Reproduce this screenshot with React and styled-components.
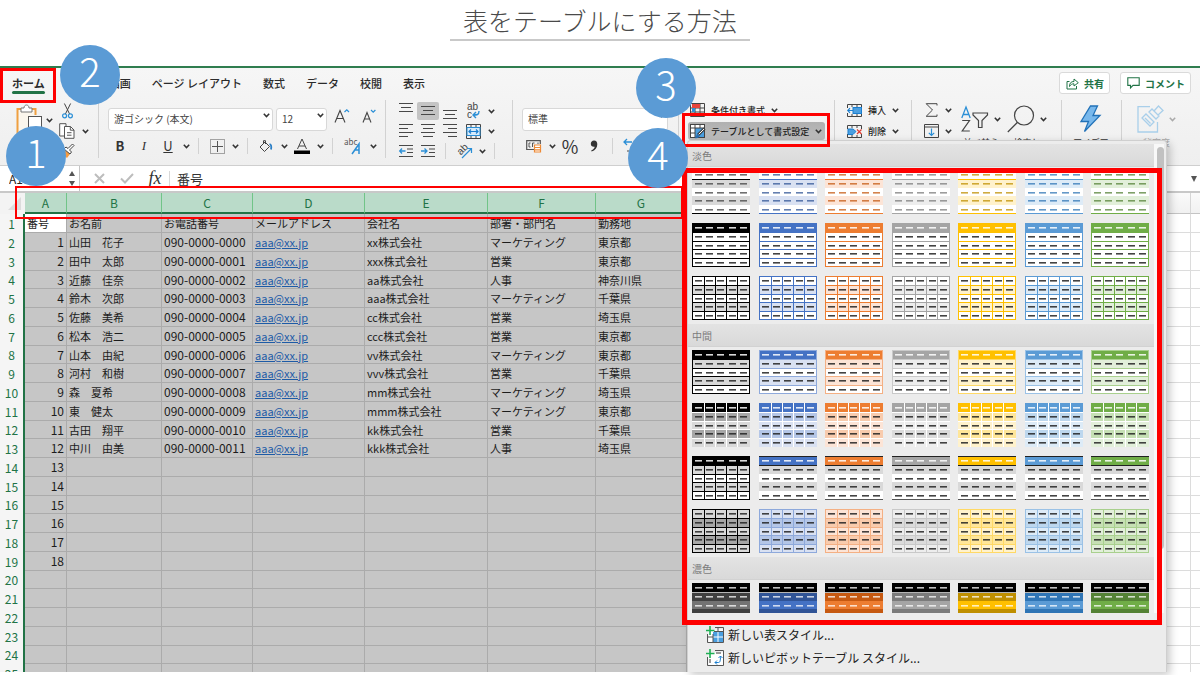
import { useState } from 'react'
import styled, { createGlobalStyle, css } from 'styled-components'

const GlobalStyle = createGlobalStyle`
  * {
    box-sizing: border-box;
  }

  body {
    margin: 0;
    background: #fff;
    color: #222;
    font-family: 'Noto Sans CJK JP', 'Noto Sans', sans-serif;
  }

  button, input, select {
    margin: 0;
    padding: 0;
    border: none;
    background: none;
    color: inherit;
    font-family: inherit;
  }

  svg {
    display: block;
    flex: none;
    overflow: visible;
  }
`

const Page = styled.div`
  position: relative;
  height: 100vh;
  display: flex;
  flex-direction: column;
  padding-bottom: 3px;
  overflow: hidden;
`
const Title = styled.h1`
  align-self: center;
  width: 300px;
  height: 41px;
  margin: 0 0 25px;
  padding-top: 2px;
  border-bottom: 2px solid #c9c9c9;
  color: #4a4a4a;
  font-size: 25px;
  font-weight: 300;
  line-height: 36px;
  text-align: center;
  flex: none;
`
const Window = styled.main`
  flex: 1;
  min-height: 0;
  display: flex;
  flex-direction: column;
  border-top: 2px solid #2f7d4f;
`
const Chrome = styled.header`
  flex: none;
  background: linear-gradient(#f6f6f6, #efefef);
  border-bottom: 1px solid #cfcfcf;
`
const Tabs = styled.nav`
  display: flex;
  align-items: center;
  gap: 21px;
  height: 30px;
  padding: 0 9px 0 12px;
`
const Tab = styled.a`
  position: relative;
  color: #2b2b2b;
  font-size: 11px;
  font-weight: ${({ $active }) => ($active ? 700 : 500)};
  line-height: 16px;
  text-decoration: none;
  white-space: nowrap;

  ${({ $active }) =>
    $active &&
    css`
      &::after {
        content: '';
        position: absolute;
        left: 0;
        right: 0;
        top: 16px;
        height: 3px;
        border-radius: 2px;
        background: #217346;
      }
    `}
`
const TabActions = styled.div`
  display: flex;
  gap: 10px;
  margin-left: auto;
`
const ActionButton = styled.button`
  display: flex;
  align-items: center;
  gap: 5px;
  height: 22px;
  padding: 0 5px 0 6px;
  border: 1px solid #dadada;
  border-radius: 3px;
  background: #fff;
  color: #217346;
  font-size: 10px;
  font-weight: 700;
`

const Ribbon = styled.div`
  display: flex;
  height: 67px;
`
const Group = styled.section`
  position: relative;
  flex: ${({ $width }) => ($width ? `0 0 ${$width}px` : 1)};
  display: flex;
  gap: ${({ $gap }) => $gap || 0}px;
  padding: 3px 0 0 ${({ $inset }) => $inset || 0}px;

  &::after {
    content: '';
    position: absolute;
    right: 0;
    top: 2px;
    width: ${({ $width }) => ($width ? 1 : 0)}px;
    height: 58px;
    background: #d2d2d2;
  }
`
const Stack = styled.div`
  display: flex;
  flex-direction: column;
  gap: ${({ $gap }) => $gap || 0}px;
`
const Line = styled.div`
  display: flex;
  align-items: center;
  height: ${({ $height }) => $height || 20}px;
`
const FieldLine = styled.div`
  display: flex;
  align-items: center;
  gap: 3px;
  height: 29px;
`
const Tool = styled.button`
  display: flex;
  align-items: center;
  justify-content: center;
  width: ${({ $width }) => $width || 24}px;
  height: 18px;
  border-radius: 2px;
  background: ${({ $on }) => ($on ? '#c4c4c4' : 'none')};
  color: #333;
  font-size: ${({ $size }) => $size || 13}px;
  line-height: 18px;

  i {
    font-family: 'Liberation Serif', serif;
  }
`
const Separator = styled.span`
  width: 1px;
  height: 16px;
  margin: 0 6px;
  background: #d2d2d2;
`
const LabelTool = styled.button`
  display: flex;
  align-items: center;
  gap: 6px;
  height: 18px;
  padding: 0 3px 0 2px;
  border-radius: 3px;
  background: ${({ $on }) => ($on ? 'linear-gradient(#b0b0b0, #bdbdbd)' : 'none')};
  color: #222;
  font-size: 9px;
  font-weight: 500;
  white-space: nowrap;
`
const BigTool = styled.button`
  display: flex;
  flex-direction: column;
  align-items: center;
  height: 50px;
  color: ${({ $dim }) => ($dim ? '#a9a9a9' : '#333')};
  font-size: 9px;
  line-height: 12px;
  white-space: nowrap;

  span {
    display: flex;
    align-items: center;
    gap: 5px;
    height: 36px;
  }
`
const SelectBox = styled.label`
  position: relative;
  display: block;
  width: ${({ $width }) => $width}px;
  height: 23px;

  select {
    width: 100%;
    height: 100%;
    padding: 0 5px 2px;
    border: 1px solid #d8d8d8;
    border-radius: 3px;
    background: #fff;
    color: #444;
    font-size: 10px;
    appearance: none;
  }

  svg {
    position: absolute;
    right: 3px;
    top: 9px;
  }
`

const FormulaBar = styled.div`
  flex: none;
  display: flex;
  align-items: center;
  height: 25px;
  background: #fff;
`
const NameBox = styled.div`
  display: flex;
  align-items: center;
  width: 80px;
  height: 25px;
  margin-right: 5px;
  padding: 0 3px 0 9px;
  border-right: 1px solid #c4c4c4;

  input {
    flex: 1;
    min-width: 0;
    font-size: 12px;
  }
`
const FormulaTool = styled.button`
  display: flex;
  justify-content: center;
  width: 28px;
  color: #333;
  font-family: 'Liberation Serif', serif;
  font-size: 18px;
  font-style: italic;
`
const FormulaInput = styled.input`
  flex: 1;
  height: 16px;
  padding-left: 7px;
  border-left: 1px solid #d8d8d8;
  color: #333;
  font-size: 13px;
  outline: none;
`

const Sheet = styled.div`
  flex: 1;
  min-height: 0;
  overflow: hidden;
  border-top: 2px solid #c8c8c8;
`
const Table = styled.table`
  width: max-content;
  table-layout: fixed;
  border-collapse: separate;
  border-spacing: 0;
  font-size: 11px;
  line-height: 16px;

  tbody tr {
    height: 19px;
  }

  tbody tr:nth-child(4n) {
    height: 18px;
  }
`
const ColumnHead = styled.th`
  height: 21px;
  padding: 0;
  border-right: 1px solid ${({ $on }) => ($on ? '#71c488' : '#d6d6d6')};
  border-bottom: ${({ $on }) => ($on ? '2px solid #217346' : '1px solid #c4c4c4')};
  background: ${({ $on }) => ($on ? '#badbc9' : 'linear-gradient(#fafafa, #f1f1f1)')};
  color: #217346;
  font-size: 12px;
  font-weight: 400;
`
const Corner = styled.th`
  padding: 0 0 0 7px;
  background: #f3f3f3;
`
const RowHead = styled.th`
  padding: 0;
  border-right: 2px solid #217346;
  background: #f5f5f5;
  color: #217346;
  font-size: 12px;
  font-weight: 400;
`
const Cell = styled.td`
  padding: 0 2px;
  border-right: 1px solid ${({ $on }) => ($on ? '#ababab' : '#dcdcdc')};
  border-bottom: 1px solid ${({ $on }) => ($on ? '#ababab' : '#dcdcdc')};
  background: ${({ $on, $cursor }) => ($on && !$cursor ? '#c6c6c6' : '#fff')};
  color: #1c1c1c;
  font-size: ${({ $digits }) => ($digits ? 12 : 11)}px;
  text-align: ${({ $right }) => ($right ? 'right' : 'left')};
  white-space: nowrap;
  overflow: hidden;

  a {
    color: #1d5ba6;
  }
`

const Panel = styled.div`
  position: absolute;
  z-index: 2;
  top: 42px;
  left: 8px;
  width: 480px;
  height: 532px;
  display: flex;
  flex-direction: column;
  padding-top: 3px;
  border: 1px solid #cfcfcf;
  border-bottom: none;
  border-radius: 4px 4px 0 0;
  background: #ececec;
  box-shadow: 3px 3px 8px rgba(0, 0, 0, 0.22);
`
const List = styled.div`
  flex: 1;
  min-height: 0;
  display: flex;
  padding-right: 2px;
`
const Gallery = styled.div`
  flex: 1;
  overflow: hidden;
`
const Track = styled.div`
  width: 10px;
  padding: 3px 0 0 3px;
  background: #f8f8f8;
`
const Thumb = styled.div`
  width: 7px;
  height: 402px;
  border-radius: 4px;
  background: #c1c1c1;
`
const SectionTitle = styled.h2`
  height: 23px;
  margin: 0;
  padding-left: 4px;
  border-bottom: 1px solid #d2d2d2;
  background: linear-gradient(#e3e3e3, #d9d9d9);
  color: #7c7c7c;
  font-size: 10px;
  font-weight: 400;
  line-height: 23px;
`
const Swatches = styled.div`
  display: grid;
  grid-template-columns: repeat(7, max-content);
  justify-content: space-between;
  row-gap: 9px;
  padding: 3px 5px 4px 4px;
`
const Footer = styled.div`
  flex: none;
  padding: 10px 0 3px 18px;
`
const MenuItem = styled.button`
  display: flex;
  align-items: center;
  gap: 4px;
  height: 23px;
  color: #222;
  font-size: 12px;
`

const Mark = styled.div`
  position: absolute;
  z-index: 3;
  left: ${({ $x }) => $x}px;
  top: ${({ $y }) => $y}px;
  width: ${({ $w }) => $w}px;
  height: ${({ $h }) => $h}px;
  border: ${({ $line }) => $line || 2}px solid #fe0000;
  pointer-events: none;
`
const Step = styled.div`
  position: absolute;
  z-index: 4;
  left: ${({ $x }) => $x}px;
  top: ${({ $y }) => $y}px;
  width: 60px;
  height: 60px;
  border-radius: 50%;
  background: #5b9bd5;
  color: #fff;
  font-size: 40px;
  font-weight: 300;
  line-height: 50px;
  text-align: center;
`

const tabs = ['ホーム', '挿入', '描画', 'ページ レイアウト', '数式', 'データ', '校閲', '表示']

const columns = [
  { name: 'A', width: 42, on: true },
  { name: 'B', width: 95, on: true },
  { name: 'C', width: 91, on: true },
  { name: 'D', width: 112, on: true },
  { name: 'E', width: 123, on: true },
  { name: 'F', width: 108, on: true },
  { name: 'G', width: 91, on: true },
  { name: 'H', width: 126 },
  { name: 'I', width: 126 },
  { name: 'J', width: 126 },
  { name: 'K', width: 126 },
  { name: 'L', width: 126 },
]

const people = [
  ['番号', 'お名前', 'お電話番号', 'メールアドレス', '会社名', '部署・部門名', '勤務地'],
  [1, '山田　花子', '090-0000-0000', 'aaa@xx.jp', 'xx株式会社', 'マーケティング', '東京都'],
  [2, '田中　太郎', '090-0000-0001', 'aaa@xx.jp', 'xxx株式会社', '営業', '東京都'],
  [3, '近藤　佳奈', '090-0000-0002', 'aaa@xx.jp', 'aa株式会社', '人事', '神奈川県'],
  [4, '鈴木　次郎', '090-0000-0003', 'aaa@xx.jp', 'aaa株式会社', 'マーケティング', '千葉県'],
  [5, '佐藤　美希', '090-0000-0004', 'aaa@xx.jp', 'cc株式会社', '営業', '埼玉県'],
  [6, '松本　浩二', '090-0000-0005', 'aaa@xx.jp', 'ccc株式会社', '営業', '東京都'],
  [7, '山本　由紀', '090-0000-0006', 'aaa@xx.jp', 'vv株式会社', 'マーケティング', '東京都'],
  [8, '河村　和樹', '090-0000-0007', 'aaa@xx.jp', 'vvv株式会社', '営業', '千葉県'],
  [9, '森　夏希', '090-0000-0008', 'aaa@xx.jp', 'mm株式会社', 'マーケティング', '埼玉県'],
  [10, '東　健太', '090-0000-0009', 'aaa@xx.jp', 'mmm株式会社', 'マーケティング', '東京都'],
  [11, '古田　翔平', '090-0000-0010', 'aaa@xx.jp', 'kk株式会社', '営業', '千葉県'],
  [12, '中川　由美', '090-0000-0011', 'aaa@xx.jp', 'kkk株式会社', '人事', '埼玉県'],
  [13],
  [14],
  [15],
  [16],
  [17],
  [18],
]

const rows = Array.from({ length: 25 }, (_, i) => people[i] || [])

const themes = [
  { name: '黒', base: '#000000', line: '#000000', tint: '#d9d9d9', mid: '#a6a6a6', dark: '#404040', body: '#737373' },
  { name: '青', base: '#4472c4', line: '#8ea9db', tint: '#d9e1f2', mid: '#b4c6e7', dark: '#305496', body: '#4472c4' },
  { name: 'オレンジ', base: '#ed7d31', line: '#f4b084', tint: '#fce4d6', mid: '#f8cbad', dark: '#c65911', body: '#ed7d31' },
  { name: '灰色', base: '#a5a5a5', line: '#c9c9c9', tint: '#ededed', mid: '#dbdbdb', dark: '#7b7b7b', body: '#a5a5a5' },
  { name: '金', base: '#ffc000', line: '#ffd966', tint: '#fff2cc', mid: '#ffe699', dark: '#bf8f00', body: '#ffc000' },
  { name: '水色', base: '#5b9bd5', line: '#9bc2e6', tint: '#ddebf7', mid: '#bdd7ee', dark: '#2f75b5', body: '#5b9bd5' },
  { name: '緑', base: '#70ad47', line: '#a9d08e', tint: '#e2efda', mid: '#c6e0b4', dark: '#548235', body: '#70ad47' },
]

// every preset says how its five bands, its rules and its dashes are coloured
const presets = {
  light1: (t) => ({
    bands: ['#fff', t.tint, '#fff', t.tint, '#fff'],
    rules: { 0: t.base, 1: t.base, 5: t.base },
    head: t.dark,
    dash: t.dark,
    soft: 0.75,
  }),
  light2: (t) => ({
    bands: [t.base, '#fff', '#fff', '#fff', '#fff'],
    rules: { 1: t.base, 2: t.base, 3: t.base, 4: t.base },
    frame: t.base,
    head: '#fff',
  }),
  light3: (t) => ({
    bands: ['#fff', t.tint, '#fff', t.tint, '#fff'],
    rules: { 1: t.base, 2: t.base, 3: t.base, 4: t.base },
    columns: t.base,
    frame: t.base,
  }),
  medium1: (t) => ({
    bands: [t.base, t.tint, '#fff', t.tint, '#fff'],
    rules: { 1: t.line, 2: t.line, 3: t.line, 4: t.line },
    frame: t.line,
    head: '#fff',
  }),
  medium2: (t) => ({
    bands: [t.base, t.mid, t.tint, t.mid, t.tint],
    rules: { 1: '#fff', 2: '#fff', 3: '#fff', 4: '#fff' },
    columns: '#fff',
    head: '#fff',
  }),
  medium3: (t) =>
    t.base === '#000000'
      ? {
          bands: ['#000', t.tint, '#fff', t.tint, '#fff'],
          rules: { 1: '#000', 2: '#000', 3: '#000', 4: '#000' },
          columns: '#000',
          frame: '#000',
          head: '#fff',
        }
      : {
          bands: [t.base, '#d9d9d9', '#fff', '#d9d9d9', '#fff'],
          rules: { 0: '#222', 1: '#222', 5: '#555' },
          head: '#fff',
        },
  medium4: (t) => ({
    bands: [t.tint, t.mid, t.tint, t.mid, t.tint],
    rules: { 1: t.line, 2: t.line, 3: t.line, 4: t.line },
    columns: t.line,
    frame: t.line,
  }),
  dark1: (t) => ({
    bands: ['#000', t.dark, t.body, t.dark, t.body],
    rules: { 1: '#b5b5b5' },
    head: '#fff',
    dash: '#fff',
    soft: 0.75,
  }),
}

const sections = [
  { title: '淡色', presets: ['light1', 'light2', 'light3'] },
  { title: '中間', presets: ['medium1', 'medium2', 'medium3', 'medium4'] },
  { title: '濃色', presets: ['dark1'] },
]

const bandTops = [0, 9, 18, 26, 35, 43]

function Swatch({ theme, preset }) {
  const look = presets[preset](theme)
  return (
    <button aria-label={`${theme.name} ${preset}`}>
      <svg width="58" height="44" viewBox="0 0 58 44">
        <g shapeRendering="crispEdges">
          {look.bands.map((fill, i) => (
            <rect
              key={i}
              y={bandTops[i]}
              width="58"
              height={(i === 4 ? 44 : bandTops[i + 1]) - bandTops[i]}
              fill={fill}
            />
          ))}
          {Object.entries(look.rules).map(([i, fill]) => (
            <rect key={i} y={bandTops[i]} width="58" height="1" fill={fill} />
          ))}
          {look.columns &&
            [12, 23, 34, 45].map((x) => (
              <rect key={x} x={x} width="1" height="44" fill={look.columns} />
            ))}
          {look.frame && (
            <rect x="0.5" y="0.5" width="57" height="43" fill="none" stroke={look.frame} />
          )}
        </g>
        {look.bands.map((_, row) =>
          [3, 14, 25, 37, 48].map((x) => (
            <rect
              key={`${row}-${x}`}
              x={x}
              y={bandTops[row] + 4}
              width="7"
              height="1.6"
              fill={(row === 0 && look.head) || look.dash || '#222'}
              opacity={look.soft || 0.85}
            />
          ))
        )}
      </svg>
    </button>
  )
}

const Chevron = ({ color = '#333' }) => (
  <svg width="7" height="5" viewBox="0 0 7 5" fill="none" stroke={color} strokeWidth="1.5">
    <path d="M0.8 0.8 L3.5 3.6 L6.2 0.8" />
  </svg>
)

const More = ({ label }) => (
  <Tool $width={12} aria-label={label}>
    <Chevron />
  </Tool>
)

const PasteIcon = () => (
  <svg width="27" height="38" viewBox="0 0 27 38" fill="none">
    <path d="M5 8 H1.5 V32 H12 M16 8 H19.5 V14" stroke="#f0a040" strokeWidth="2" />
    <rect x="3" y="9" width="15" height="22" fill="#fbf6ec" />
    <path d="M5 11 V7 H8 C8 3 13 3 13 7 H16 V11 Z" fill="#fff" stroke="#777" />
    <rect x="12.5" y="15.5" width="13" height="15" fill="#fff" stroke="#555" />
  </svg>
)

const CutIcon = () => (
  <svg width="11" height="16" viewBox="0 0 11 16" fill="none">
    <path d="M2.4 0.5 L7.6 11 M8.6 0.5 L3.4 11" stroke="#444" />
    <circle cx="2.6" cy="12.8" r="2" stroke="#2b8fd6" strokeWidth="1.2" />
    <circle cx="8.4" cy="12.8" r="2" stroke="#2b8fd6" strokeWidth="1.2" />
  </svg>
)

const CopyIcon = () => (
  <svg width="16" height="16" viewBox="0 0 16 16" stroke="#555" fill="#fff">
    <path d="M5 13 H0.7 V0.7 H7 V4" />
    <path d="M5.5 3.5 H11.5 L15 7 V15.3 H5.5 Z" />
    <path d="M11.3 3.5 V7.2 H15 M8 9.7 H12.5 M8 12.2 H12.5" fill="none" />
  </svg>
)

const BrushIcon = () => (
  <svg width="16" height="16" viewBox="0 0 16 16">
    <path d="M1 9 L8 15 L11 11 L5 6 Z" fill="#f59b42" />
    <path d="M5 6 L11 11 L12.5 9 L10.5 7 L15 2.5 L13.5 1 L9 5.5 L7 4 Z" fill="#fff" stroke="#444" />
  </svg>
)

const BorderIcon = () => (
  <svg width="15" height="15" viewBox="0 0 15 15" fill="none" stroke="#555">
    <rect x="0.5" y="0.5" width="14" height="14" strokeDasharray="1 1" />
    <path d="M7.5 2 V13 M2 7.5 H13" />
  </svg>
)

const BucketIcon = () => (
  <svg width="14" height="13" viewBox="0 0 14 13" fill="none" stroke="#444">
    <path d="M1 7 L6 2 L10.5 6.5 L5.5 11.5 Z M4.5 3.5 V0.7 H6.5 V4" />
    <path d="M10.5 4 C12.5 4.5 12.5 7 12 9.5" stroke="#2b7fc6" strokeWidth="1.8" />
  </svg>
)

const FontColorIcon = () => (
  <svg width="17" height="16" viewBox="0 0 17 16">
    <path d="M3.5 11 L8 1 L12.5 11 M5 8 H11" fill="none" stroke="#444" />
    <rect y="12.5" width="16" height="3.5" fill="#000" />
  </svg>
)

const PhoneticIcon = () => (
  <svg width="18" height="17" viewBox="0 0 18 17">
    <text x="0" y="7" fontSize="8" fill="#555">
      abc
    </text>
    <path d="M8 16 L15 6 V16 M11 12 H15.5" fill="none" stroke="#2b8fd6" strokeWidth="1.5" />
  </svg>
)

const GrowIcon = () => (
  <svg width="16" height="16" viewBox="0 0 16 16" fill="none">
    <path d="M1 14.5 L6 2.5 L11 14.5 M2.6 10.5 H9.4" stroke="#444" strokeWidth="1.1" />
    <path d="M10.5 4 L12.8 1.8 L15 4" stroke="#2b8fd6" strokeWidth="1.2" />
  </svg>
)

const ShrinkIcon = () => (
  <svg width="16" height="16" viewBox="0 0 16 16" fill="none">
    <path d="M2 14.5 L6 4.5 L10 14.5 M3.4 11 H8.6" stroke="#444" strokeWidth="1.1" />
    <path d="M10 2 L12.2 4.2 L14.4 2" stroke="#2b8fd6" strokeWidth="1.2" />
  </svg>
)

// rules of a paragraph: [start, end] for each line
const alignLines = {
  wide: [[0, 14], [2, 12], [0, 14]],
  left: [[0, 14], [0, 9], [0, 14], [0, 9]],
  center: [[0, 14], [2, 12], [0, 14], [2, 12]],
  right: [[0, 14], [5, 14], [0, 14], [5, 14]],
}

const AlignIcon = ({ kind, top = 2 }) => (
  <svg width="14" height="18" viewBox="0 0 14 18" stroke="#484848">
    {alignLines[kind].map(([a, b], i) => (
      <path key={i} d={`M${a} ${top + i * 4 + 0.5} H${b}`} />
    ))}
  </svg>
)

const IndentIcon = ({ flip }) => (
  <svg width="14" height="14" viewBox="0 0 14 14" fill="none" stroke="#484848">
    <path d="M0 1.5 H14 M8 5 H14 M8 8.5 H14 M0 12.5 H14" />
    <path
      d={flip ? 'M0 7 H6 M3.5 4.5 L6 7 L3.5 9.5' : 'M6.5 7 H0.7 M3 4.5 L0.7 7 L3 9.5'}
      stroke="#2b8fd6"
      strokeWidth="1.3"
    />
  </svg>
)

const WrapIcon = () => (
  <svg width="15" height="18" viewBox="0 0 15 18" fontFamily="Liberation Sans, sans-serif">
    <text x="1" y="8" fontSize="10" fill="#444">
      ab
    </text>
    <text x="1" y="16" fontSize="10" fill="#444">
      c
    </text>
    <path d="M13 9 C13 13 11 13 7 13 M10 10 L7 13 L10 16" fill="none" stroke="#2b8fd6" strokeWidth="1.4" />
  </svg>
)

const MergeIcon = () => (
  <svg width="15" height="15" viewBox="0 0 15 15" fill="none">
    <path d="M0.5 0.5 H14.5 V14.5 H0.5 Z M5 0.5 V3 M10 0.5 V3 M5 12 V14.5 M10 12 V14.5" stroke="#444" />
    <rect x="1" y="3.5" width="13" height="8" fill="#d7ebfb" stroke="#2b8fd6" />
    <path d="M3 7.5 H12 M5 5.5 L3 7.5 L5 9.5 M10 5.5 L12 7.5 L10 9.5" stroke="#1b7fd0" strokeWidth="1.2" />
  </svg>
)

const RotateIcon = () => (
  <svg width="17" height="16" viewBox="0 0 17 16" fontFamily="Liberation Sans, sans-serif">
    <text x="2" y="12" fontSize="10" fill="#444" transform="rotate(-45 4 9)">
      ab
    </text>
    <path d="M6 15 L15 6 M11 5.5 H15.5 V10" fill="none" stroke="#2b8fd6" strokeWidth="1.2" />
  </svg>
)

const MoneyIcon = () => (
  <svg width="16" height="13" viewBox="0 0 16 13" fill="none">
    <path d="M8 9.5 H0.7 V0.7 H14.3 V4" stroke="#555" strokeWidth="1.2" />
    <path d="M4.5 3 H3 V7 H4.5 M8.5 3 H6.5 V7 M12 2.5 V4" stroke="#555" />
    <path d="M8.5 5 H14.5 V12 H8.5 Z M8.5 7.5 H14.5 M8.5 9.8 H14.5" fill="#fff" stroke="#ee8a36" strokeWidth="1.2" />
  </svg>
)

const CommaIcon = () => (
  <svg width="8" height="12" viewBox="0 0 8 12" fill="#333">
    <path d="M4 0.5 C6.3 0.5 7.3 2.2 7.3 4.2 C7.3 7.6 5.2 10.3 1.6 11.5 L1.2 10.5 C3.3 9.5 4.6 8.2 4.7 6.7 C2.4 7.2 0.8 5.8 0.8 3.8 C0.8 1.9 2.2 0.5 4 0.5 Z" />
  </svg>
)

const DecimalIcon = () => (
  <svg width="16" height="16" viewBox="0 0 16 16" fill="none">
    <path d="M9 4 H1 M4 1 L1 4 L4 7" stroke="#2b8fd6" strokeWidth="1.3" />
    <path d="M4 13 H6 M8 10 H12 V14 H8 Z" stroke="#444" />
  </svg>
)

const ConditionIcon = () => (
  <svg width="15" height="14" viewBox="0 0 15 14" fill="none">
    <path d="M0.5 0.5 H14.5 V13.5 H0.5 Z M0.5 5 H14.5 M0.5 9 H14.5 M5 0 V14 M10 0 V14" stroke="#444" />
    <rect x="2" y="1" width="8" height="4" fill="#e8453c" />
    <rect x="2" y="5" width="3" height="4" fill="#2b8fd6" />
  </svg>
)

const TableFormatIcon = () => (
  <svg width="15" height="15" viewBox="0 0 15 15" fill="none">
    <rect x="0.5" y="0.5" width="14" height="13" fill="#fff" stroke="#444" />
    <rect x="5" y="4" width="9" height="9" fill="#4b9fe0" />
    <path d="M0.5 4 H14.5 M0.5 9 H5 M5 0.5 V13.5 M10 0.5 V4" stroke="#444" />
    <path d="M14.5 4.5 L8 11" stroke="#444" strokeWidth="3" />
    <path d="M14 5 L8.5 10.5" stroke="#fff" />
    <path d="M8 10 C5.5 10.5 7 13 4.5 14 C7.5 15 9.5 13.5 9.5 11.5 Z" fill="#2b6fb0" />
  </svg>
)

const CellsIcon = ({ remove }) => (
  <svg width="15" height="13" viewBox="0 0 15 13" fill="none">
    <path d="M0.5 4 V0.5 H14.5 V4 M0.5 9 V12.5 H14.5 V9 M5 0.5 V3 M10 0.5 V3 M5 10 V12.5 M10 10 V12.5" stroke="#444" />
    {remove ? (
      <>
        <path d="M1 4 H6 L9 6.5 L6 9.5 H1 Z" fill="#4b9fe0" stroke="#1b7fd0" />
        <path d="M10 4.5 L14.5 9 M14.5 4.5 L10 9" stroke="#e03c31" strokeWidth="1.2" />
      </>
    ) : (
      <>
        <rect x="6" y="3.5" width="8.5" height="6" fill="#4b9fe0" stroke="#1b7fd0" />
        <path d="M6 6.5 H0.8 M3 4.2 L0.8 6.5 L3 8.8" stroke="#1b7fd0" strokeWidth="1.2" />
      </>
    )}
  </svg>
)

const SumIcon = () => (
  <svg width="15" height="14" viewBox="0 0 15 14" fill="none" stroke="#444">
    <path d="M13 2.5 V0.7 H2.2 L8.5 7 L2.2 13.3 H13 V11.5" />
  </svg>
)

const FillIcon = () => (
  <svg width="15" height="14" viewBox="0 0 15 14" fill="none">
    <path d="M0.5 0.5 H14.5 V13.5 H0.5 Z M0.5 3 H14.5" stroke="#444" />
    <path d="M7.5 4.5 V11.5 M4.8 8.8 L7.5 11.5 L10.2 8.8" stroke="#2b8fd6" strokeWidth="1.2" />
  </svg>
)

const SortIcon = () => (
  <svg width="28" height="26" viewBox="0 0 28 26" fill="none">
    <path d="M0.8 12 L5 1 L9.2 12 M2.4 8.5 H7.6" stroke="#2b8fd6" strokeWidth="1.3" />
    <path d="M1.2 14.5 H8.5 L1.2 25 H8.8" stroke="#444" strokeWidth="1.2" />
    <path d="M12 7 H26.5 V9 L21 14.5 V21.5 H17.5 V14.5 L12 9 Z" stroke="#444" strokeWidth="1.2" />
  </svg>
)

const SearchIcon = () => (
  <svg width="28" height="28" viewBox="0 0 28 28" fill="none" stroke="#444" strokeWidth="1.2">
    <circle cx="17" cy="10.5" r="9.5" />
    <path d="M10.3 17.5 L0.8 27" />
  </svg>
)

const BoltIcon = () => (
  <svg width="21" height="28" viewBox="0 0 21 28">
    <path d="M10.5 1 H17.5 L13 10.5 H20 L4.5 26.5 L8.5 16.5 H1 Z" fill="#78b8ec" stroke="#2272b8" strokeWidth="1.3" />
  </svg>
)

const SensitivityIcon = () => (
  <svg width="27" height="28" viewBox="0 0 27 28" fill="none" stroke="#a9cfea" strokeWidth="1.3">
    <path d="M13 1.7 H1 V27 H20.5 V17" />
    <path d="M5 13 L9 9 L17 17 L13 21 Z M8 13 L13.5 18.5" />
    <path d="M12 7 L15 4 L22 11 L19 14 Z M17 6 L21.5 1 L26 5.5 L21 10" />
  </svg>
)

const ShareIcon = () => (
  <svg width="13" height="13" viewBox="0 0 13 13" fill="none" stroke="#217346">
    <path d="M3.5 4.5 H1 V12 H10.5 V9" />
    <path d="M3.5 9.5 C3.5 6 5 4.5 8 4.5 V2 L12.3 5.7 L8 9 V6.8 C6 6.8 4.8 7.5 3.5 9.5 Z" />
  </svg>
)

const CommentIcon = () => (
  <svg width="13" height="12" viewBox="0 0 13 12" fill="none" stroke="#217346" strokeWidth="1.1">
    <path d="M0.8 0.8 H12.2 V8.4 H6 L3.5 11 V8.4 H0.8 Z" />
  </svg>
)

const NewTableIcon = ({ pivot }) => (
  <svg width="18" height="17" viewBox="0 0 18 17" fill="none">
    <rect x="2.5" y="3.5" width="15" height="13" fill="#fff" />
    <path d="M9 1.5 H17.5 V16.5 H1.5 V8" stroke="#555" />
    {pivot ? (
      <>
        <path d="M10 4 H15 M4 10 V14" stroke="#999" strokeWidth="2" />
        <path d="M9 13.5 H12.5 C14 13.5 14.5 12 14.5 7 M11 11.5 L9 13.5 L11 15.5 M12.5 9 L14.5 7 L16.5 9" stroke="#1b7fd0" />
      </>
    ) : (
      <>
        <rect x="7" y="6" width="10" height="10" fill="#4b9fe0" />
        <path d="M7 11 H17 M12 6 V16" stroke="#fff" />
        <path d="M2 11 H7 M7 8 V16 M12 2 V6 M8 5.5 H17" stroke="#555" />
      </>
    )}
    <path d="M4 0 V9 M0 4.5 H8.5" stroke="#1fae54" strokeWidth="1.6" />
  </svg>
)

const StyleMenu = () => (
  <Panel>
    <List>
      <Gallery>
        {sections.map((section) => (
          <div key={section.title}>
            <SectionTitle>{section.title}</SectionTitle>
            <Swatches>
              {section.presets.map((preset) =>
                themes.map((theme) => (
                  <Swatch key={preset + theme.name} theme={theme} preset={preset} />
                ))
              )}
            </Swatches>
          </div>
        ))}
      </Gallery>
      <Track>
        <Thumb />
      </Track>
    </List>
    <Footer>
      <MenuItem>
        <NewTableIcon />
        新しい表スタイル...
      </MenuItem>
      <MenuItem>
        <NewTableIcon pivot />
        新しいピボットテーブル スタイル...
      </MenuItem>
    </Footer>
  </Panel>
)

const Select = ({ label, width, options }) => (
  <SelectBox $width={width}>
    <select aria-label={label}>
      {options.map((option) => (
        <option key={option}>{option}</option>
      ))}
    </select>
    <Chevron />
  </SelectBox>
)

function ClipboardGroup() {
  return (
    <Group $width={99} $inset={16}>
      <Line $height={38}>
        <Tool $width={27} aria-label="貼り付け">
          <PasteIcon />
        </Tool>
        <More label="貼り付けオプション" />
      </Line>
      <Stack>
        <Line>
          <Tool aria-label="切り取り">
            <CutIcon />
          </Tool>
        </Line>
        <Line>
          <Tool aria-label="コピー">
            <CopyIcon />
          </Tool>
          <More label="コピーオプション" />
        </Line>
        <Line>
          <Tool aria-label="書式のコピー">
            <BrushIcon />
          </Tool>
        </Line>
      </Stack>
    </Group>
  )
}

function FontGroup() {
  return (
    <Group $width={287} $inset={9}>
      <Stack $gap={6}>
        <FieldLine>
          <Select label="フォント" width={165} options={['游ゴシック (本文)']} />
          <Select label="フォント サイズ" width={51} options={['12']} />
          <Tool aria-label="拡大">
            <GrowIcon />
          </Tool>
          <Tool aria-label="縮小">
            <ShrinkIcon />
          </Tool>
        </FieldLine>
        <Line>
          <Tool>
            <b>B</b>
          </Tool>
          <Tool>
            <i>I</i>
          </Tool>
          <Tool>
            <u>U</u>
          </Tool>
          <More label="下線" />
          <Separator />
          <Tool aria-label="罫線">
            <BorderIcon />
          </Tool>
          <More label="罫線オプション" />
          <Separator />
          <Tool aria-label="塗りつぶし">
            <BucketIcon />
          </Tool>
          <More label="塗りつぶしの色" />
          <Tool aria-label="フォントの色">
            <FontColorIcon />
          </Tool>
          <More label="文字の色" />
          <Separator />
          <Tool $width={28} aria-label="ふりがな">
            <PhoneticIcon />
          </Tool>
          <More label="ふりがなオプション" />
        </Line>
      </Stack>
    </Group>
  )
}

function AlignGroup() {
  return (
    <Group $width={127} $inset={9}>
      <Stack>
        <Line>
          <Tool $width={22} aria-label="上揃え">
            <AlignIcon kind="wide" top={1} />
          </Tool>
          <Tool $width={22} $on aria-label="上下中央揃え">
            <AlignIcon kind="wide" top={4} />
          </Tool>
          <Tool $width={22} aria-label="下揃え">
            <AlignIcon kind="wide" top={8} />
          </Tool>
          <Tool aria-label="折り返して全体を表示">
            <WrapIcon />
          </Tool>
          <More label="折り返し" />
        </Line>
        <Line>
          <Tool $width={22} aria-label="左揃え">
            <AlignIcon kind="left" />
          </Tool>
          <Tool $width={22} aria-label="中央揃え">
            <AlignIcon kind="center" />
          </Tool>
          <Tool $width={22} aria-label="右揃え">
            <AlignIcon kind="right" />
          </Tool>
          <Tool aria-label="セルを結合">
            <MergeIcon />
          </Tool>
          <More label="結合" />
        </Line>
        <Line>
          <Tool $width={22} aria-label="インデントを減らす">
            <IndentIcon />
          </Tool>
          <Tool $width={22} aria-label="インデントを増やす">
            <IndentIcon flip />
          </Tool>
          <Separator />
          <Tool aria-label="方向">
            <RotateIcon />
          </Tool>
          <More label="方向オプション" />
          <Separator />
        </Line>
      </Stack>
    </Group>
  )
}

function NumberGroup() {
  return (
    <Group $width={166} $inset={9}>
      <Stack $gap={6}>
        <FieldLine>
          <Select label="表示形式" width={146} options={['標準']} />
        </FieldLine>
        <Line>
          <Tool aria-label="通貨">
            <MoneyIcon />
          </Tool>
          <More label="通貨オプション" />
          <Tool $size={18}>%</Tool>
          <Tool aria-label="桁区切り">
            <CommaIcon />
          </Tool>
          <Separator />
          <Tool aria-label="小数点以下の桁数">
            <DecimalIcon />
          </Tool>
        </Line>
      </Stack>
    </Group>
  )
}

function StylesGroup() {
  return (
    <Group $width={156} $inset={9}>
      <Stack $gap={3}>
        <LabelTool>
          <ConditionIcon />
          条件付き書式
          <Chevron />
        </LabelTool>
        <LabelTool $on>
          <TableFormatIcon />
          テーブルとして書式設定
          <Chevron />
        </LabelTool>
      </Stack>
      <StyleMenu />
    </Group>
  )
}

function CellsGroup() {
  return (
    <Group $width={77} $inset={10}>
      <Stack $gap={3}>
        <LabelTool>
          <CellsIcon />
          挿入
          <Chevron />
        </LabelTool>
        <LabelTool>
          <CellsIcon remove />
          削除
          <Chevron />
        </LabelTool>
      </Stack>
    </Group>
  )
}

function EditGroup() {
  return (
    <Group $width={150} $inset={10} $gap={6}>
      <Stack $gap={3}>
        <LabelTool aria-label="オート SUM">
          <SumIcon />
          <Chevron />
        </LabelTool>
        <LabelTool aria-label="フィル">
          <FillIcon />
          <Chevron />
        </LabelTool>
      </Stack>
      <BigTool>
        <span>
          <SortIcon />
          <Chevron />
        </span>
        並べ替え
      </BigTool>
      <BigTool>
        <span>
          <SearchIcon />
          <Chevron />
        </span>
        検索と
      </BigTool>
    </Group>
  )
}

function App() {
  const [formula, setFormula] = useState('番号')
  const [nameBox, setNameBox] = useState('A1')

  return (
    <>
      <GlobalStyle />
      <Page>
        <Title>表をテーブルにする方法</Title>
        <Window>
          <Chrome>
            <Tabs>
              {tabs.map((tab, i) => (
                <Tab key={tab} href="#" $active={i === 0}>
                  {tab}
                </Tab>
              ))}
              <TabActions>
                <ActionButton>
                  <ShareIcon />
                  共有
                </ActionButton>
                <ActionButton>
                  <CommentIcon />
                  コメント
                </ActionButton>
              </TabActions>
            </Tabs>
            <Ribbon>
              <ClipboardGroup />
              <FontGroup />
              <AlignGroup />
              <NumberGroup />
              <StylesGroup />
              <CellsGroup />
              <EditGroup />
              <Group $width={60} $inset={11}>
                <BigTool>
                  <span>
                    <BoltIcon />
                  </span>
                  アイデア
                </BigTool>
              </Group>
              <Group $inset={15}>
                <BigTool $dim>
                  <span>
                    <SensitivityIcon />
                    <Chevron color="#aaa" />
                  </span>
                  秘密度
                </BigTool>
              </Group>
            </Ribbon>
          </Chrome>

          <FormulaBar>
            <NameBox>
              <input
                aria-label="名前ボックス"
                value={nameBox}
                onChange={(e) => setNameBox(e.target.value)}
              />
              <svg width="8" height="17" viewBox="0 0 8 17" fill="#555">
                <path d="M1 6 L4 1 L7 6 Z M1 11 L4 16 L7 11 Z" />
              </svg>
            </NameBox>
            <FormulaTool aria-label="キャンセル">
              <svg width="11" height="11" viewBox="0 0 11 11" stroke="#bdbdbd" strokeWidth="2">
                <path d="M1 1 L10 10 M10 1 L1 10" />
              </svg>
            </FormulaTool>
            <FormulaTool aria-label="入力">
              <svg width="14" height="11" viewBox="0 0 14 11" fill="none" stroke="#bdbdbd" strokeWidth="2">
                <path d="M1 5.5 L5 9.5 L13 1" />
              </svg>
            </FormulaTool>
            <FormulaTool>fx</FormulaTool>
            <FormulaInput
              aria-label="数式"
              value={formula}
              onChange={(e) => setFormula(e.target.value)}
            />
            <svg width="10" height="6" viewBox="0 0 10 6" fill="#555">
              <path d="M1 0 H7 L4 6 Z" />
            </svg>
          </FormulaBar>

          <Sheet>
            <Table>
              <colgroup>
                <col width="25" />
                {columns.map((column) => (
                  <col key={column.name} width={column.width} />
                ))}
              </colgroup>
              <thead>
                <tr>
                  <Corner>
                    <svg width="15" height="15" viewBox="0 0 15 15" fill="#dcdcdc">
                      <path d="M14 1 V14 H1 Z" />
                    </svg>
                  </Corner>
                  {columns.map((column) => (
                    <ColumnHead key={column.name} $on={column.on}>
                      {column.name}
                    </ColumnHead>
                  ))}
                </tr>
              </thead>
              <tbody>
                {rows.map((row, r) => (
                  <tr key={r}>
                    <RowHead>{r + 1}</RowHead>
                    {columns.map((column, c) => (
                      <Cell
                        key={column.name}
                        $on={column.on}
                        $cursor={r === 0 && c === 0}
                        $right={r > 0 && c === 0}
                        $digits={r > 0 && (c === 0 || c === 2)}
                      >
                        {r > 0 && c === 3 && row[c] ? <a href="#">{row[c]}</a> : row[c]}
                      </Cell>
                    ))}
                  </tr>
                ))}
              </tbody>
            </Table>
          </Sheet>
        </Window>

        <Mark $x={0} $y={68} $w={56} $h={35} $line={3} />
        <Mark $x={15} $y={186} $w={668} $h={33} />
        <Mark $x={682} $y={113} $w={148} $h={34} $line={3} />
        <Mark $x={682} $y={168} $w={480} $h={457} $line={5} />
        <Step $x={6} $y={126}>1</Step>
        <Step $x={60} $y={45}>2</Step>
        <Step $x={636} $y={58}>3</Step>
        <Step $x={628} $y={128}>4</Step>
      </Page>
    </>
  )
}

export default App
